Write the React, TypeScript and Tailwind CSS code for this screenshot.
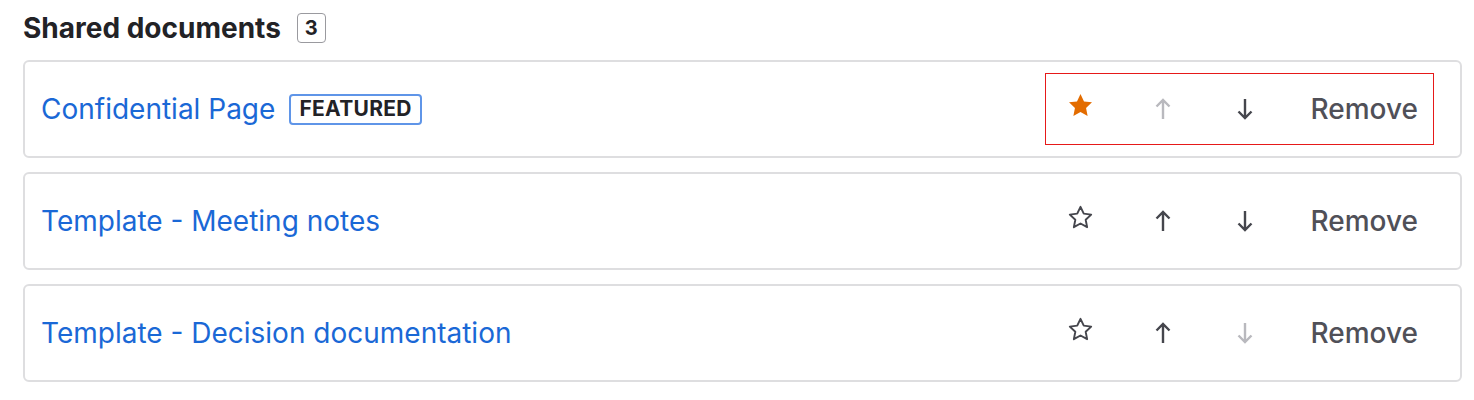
import React from "react"

type Doc = {
  title: string
  featured: boolean
  canUp: boolean
  canDown: boolean
  focused?: boolean
}

const docs: Doc[] = [
  { title: "Confidential Page", featured: true, canUp: false, canDown: true, focused: true },
  { title: "Template - Meeting notes", featured: false, canUp: true, canDown: true },
  { title: "Template - Decision documentation", featured: false, canUp: true, canDown: false },
]

function StarIcon({ filled }: { filled: boolean }) {
  const d = "M12 2.5l2.9 6.1 6.6.8-4.9 4.6 1.3 6.6L12 17.3l-5.9 3.3 1.3-6.6L2.5 9.4l6.6-.8z"
  return filled ? (
    <svg width="29" height="29" viewBox="0 0 24 24" className="-mt-2">
      <path d={d} fill="#e36c00" />
    </svg>
  ) : (
    <svg width="27" height="27" viewBox="0 0 24 24" className="-mt-2">
      <path d={d} fill="none" stroke="#45464d" strokeWidth="1.7" strokeLinejoin="round" />
    </svg>
  )
}

function Arrow({ dir, enabled }: { dir: "up" | "down"; enabled: boolean }) {
  const color = enabled ? "#45464d" : "#b9b9be"
  return (
    <svg width="16" height="22" viewBox="0 0 16 22" className={dir === "down" ? "rotate-180" : ""}>
      <path d="M8 21V2M1.5 8.5L8 2l6.5 6.5" fill="none" stroke={color} strokeWidth="2.4" />
    </svg>
  )
}

export default function App() {
  return (
    <div className="min-h-screen bg-white pl-[23px] pr-[12px] pt-[12px] font-['Inter',sans-serif]">
      {/* Heading */}
      <div className="flex items-center h-8 mb-4">
        <h2 className="text-[28px] leading-8 font-bold text-[#222226]">Shared documents</h2>
        <span className="ml-[16px] flex items-center justify-center w-[29px] h-[30px] border-[1.5px] border-[#9a9a9f] rounded-[4px] text-[20px] font-bold text-[#222226]">
          3
        </span>
      </div>

      {/* List */}
      <div className="flex flex-col gap-[14px]">
        {docs.map((doc) => (
          <div
            key={doc.title}
            className="flex items-center justify-between h-[98px] border-2 border-[#dedee0] rounded-[6px] pl-4 pr-[26px]"
          >
            <div className="flex items-center">
              <a className="text-[28px] text-[#1a68d6] leading-8 cursor-pointer">{doc.title}</a>
              {doc.featured && (
                <span className="ml-[14px] border-2 border-[#5f95e8] rounded-[4px] px-2 h-[31px] flex items-center text-[21px] font-bold tracking-[0.3px] text-[#222226]">
                  FEATURED
                </span>
              )}
            </div>

            <div
              className={
                "flex items-center h-[72px] gap-[34px] pl-[11px] pr-[7px] border " +
                (doc.focused ? "border-[#e61919]" : "border-transparent")
              }
            >
              <button className="w-12 h-12 flex items-center justify-center">
                <StarIcon filled={doc.featured} />
              </button>
              <button className="w-12 h-12 flex items-center justify-center">
                <Arrow dir="up" enabled={doc.canUp} />
              </button>
              <button className="w-12 h-12 flex items-center justify-center">
                <Arrow dir="down" enabled={doc.canDown} />
              </button>
              <button className="px-2 text-[28px] font-medium text-[#505058]">Remove</button>
            </div>
          </div>
        ))}
      </div>
    </div>
  )
}
